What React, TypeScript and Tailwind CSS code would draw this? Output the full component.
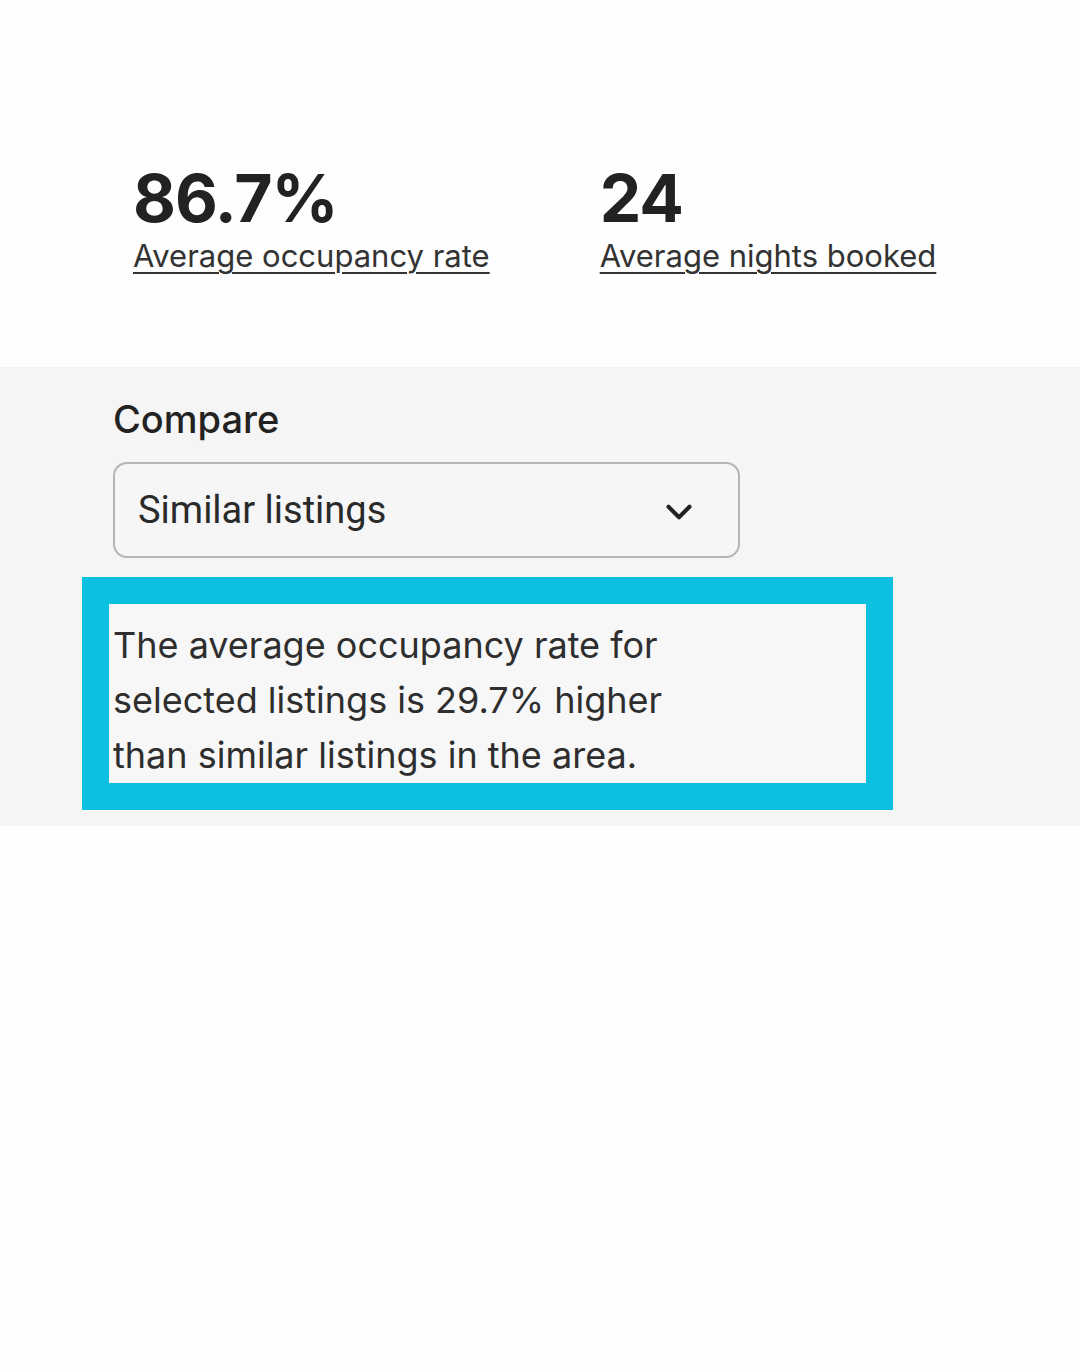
import React from 'react';
import { ChevronDown } from 'lucide-react';

const Stat = ({ value, label }: { value: string; label: string }) => (
  <div className="flex flex-col">
    <span className="text-[66px] leading-[70px] font-bold tracking-[-1px] text-[#222222]">{value}</span>
    <span className="mt-[5px] text-[31px] leading-[36px] text-[#333333] underline decoration-[2px] underline-offset-[5px]">
      {label}
    </span>
  </div>
);

export default function App() {
  return (
    <div className="min-h-[1371px] bg-[#fefefe] font-['Inter',sans-serif]">
      {/* Stats */}
      <section className="h-[367px] pt-[163px] pl-[133px] flex gap-[110px]">
        <Stat value="86.7%" label="Average occupancy rate" />
        <Stat value="24" label="Average nights booked" />
      </section>

      {/* Compare */}
      <section className="h-[459px] bg-[#f5f5f5] pt-[30px]">
        <div className="pl-[113px]">
          <h2 className="text-[38px] leading-[44px] font-medium text-[#222222]">Compare</h2>
          <button className="mt-[21px] w-[627px] h-[96px] rounded-[14px] border-2 border-[#b5b5b5] bg-[#f6f6f6] flex items-center justify-between pl-[23px] pr-[38px]">
            <span className="text-[38px] text-[#2a2a2a] font-['Roboto',sans-serif]">Similar listings</span>
            <ChevronDown size={42} strokeWidth={2.3} className="text-[#222222] mt-[4px]" />
          </button>
        </div>
        <div className="ml-[82px] mt-[19px] w-[811px] border-[27px] border-[#0cc0df] bg-[#f7f7f7] pl-[4px] pt-[14px] pb-[0px]">
          <p className="text-[36px] leading-[55px] text-[#2e2e2e] w-[620px]">
            The average occupancy rate for selected listings is 29.7% higher than similar listings in the area.
          </p>
        </div>
      </section>
    </div>
  );
}
